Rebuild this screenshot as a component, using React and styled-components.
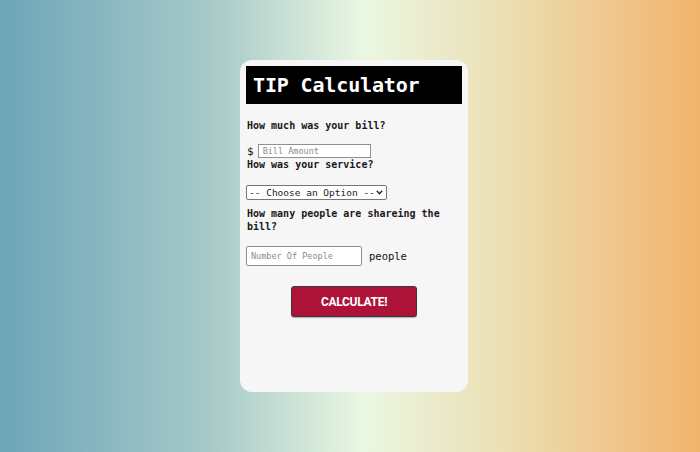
import React from "react";
import styled, { createGlobalStyle } from "styled-components";

const Global = createGlobalStyle`
  html, body { margin: 0; padding: 0; height: 100%; }
  body {
    background: linear-gradient(to right, #6da6b8 0%, #a6c9c8 30%, #eaf7e2 52%, #ecdfb4 72%, #f2b36c 100%);
    font-family: "DejaVu Sans Mono", monospace;
  }
  #root { height: 100%; }
`;

const Page = styled.div`
  height: 452px;
  display: flex;
  align-items: center;
  justify-content: center;
  padding-left: 8px;
  box-sizing: border-box;
`;

const Card = styled.div`
  width: 228px;
  height: 332px;
  box-sizing: border-box;
  padding: 6px;
  background: #f6f6f6;
  border-radius: 12px;
  display: flex;
  flex-direction: column;
`;

const Header = styled.div`
  height: 38px;
  background: #000;
  padding-left: 7px;
  display: flex;
  align-items: center;
`;

const Title = styled.h1`
  margin: 0;
  color: #fff;
  font-family: "DejaVu Sans Mono", monospace;
  font-size: 20px;
  font-weight: 700;
  line-height: 38px;
  letter-spacing: -0.15px;
`;

const Question = styled.p`
  margin: ${(p) => p.$mt}px 0 0 0;
  font-size: 10px;
  line-height: 13px;
  font-weight: 700;
  color: #1a1a1a;
  padding-left: 1px;
`;

const Row = styled.div`
  margin-top: ${(p) => p.$mt}px;
  display: flex;
  align-items: center;
  gap: ${(p) => p.$gap}px;
  font-size: 10px;
  color: #111;
`;

const Dollar = styled.span`
  font-size: 11px;
  font-weight: 400;
  padding-left: 1px;
`;

const TextInput = styled.input`
  box-sizing: border-box;
  width: ${(p) => p.$w}px;
  height: ${(p) => p.$h}px;
  border: 1px solid #8f8f8f;
  border-radius: ${(p) => p.$r}px;
  background: #fff;
  font-family: "DejaVu Sans Mono", monospace;
  font-size: 8.5px;
  padding: 0 4px;
  margin: 0;
  &::placeholder { color: #8c8c8c; }
`;

const SelectWrap = styled.div`
  position: relative;
  margin-top: 14px;
  width: 141px;
  height: 15px;
  align-self: flex-start;
`;

const Select = styled.select`
  display: block;
  appearance: none;
  -webkit-appearance: none;
  box-sizing: border-box;
  width: 100%;
  height: 100%;
  border: 1px solid #767676;
  border-radius: 2px;
  background: #fff;
  font-family: "DejaVu Sans Mono", monospace;
  font-size: 9.5px;
  color: #222;
  padding: 0 0 0 2px;
  margin: 0;
`;

const Chevron = styled.svg`
  position: absolute;
  right: 4px;
  top: 5px;
  width: 7px;
  height: 5px;
  pointer-events: none;
`;

const Unit = styled.span`
  font-size: 10.5px;
  font-weight: 500;
`;

const Button = styled.button`
  margin: 20px auto 0;
  width: 126px;
  height: 31px;
  background: #ad1238;
  border: 1px solid #3a3a3a;
  border-radius: 3px;
  box-shadow: 0 1px 1px rgba(0,0,0,0.3);
  color: #fff;
  font-family: Roboto, "Liberation Sans", sans-serif;
  font-size: 12px;
  font-weight: 700;
  letter-spacing: -0.3px;
  cursor: pointer;
`;

export default function App() {
  return (
    <>
      <Global />
      <Page>
        <Card>
          <Header>
            <Title>TIP Calculator</Title>
          </Header>
          <Question $mt={15}>How much was your bill?</Question>
          <Row $mt={12} $gap={4}>
            <Dollar>$</Dollar>
            <TextInput $w={113} $h={14} $r={0} placeholder="Bill Amount" />
          </Row>
          <Question $mt={0}>How was your service?</Question>
          <SelectWrap>
            <Select defaultValue="">
              <option value="">-- Choose an Option --</option>
              <option value="0.3">30% - Outstanding</option>
              <option value="0.2">20% - Good</option>
              <option value="0.15">15% - It was OK</option>
              <option value="0.1">10% - Bad</option>
              <option value="0.05">5% - Terrible</option>
            </Select>
            <Chevron viewBox="0 0 7 5">
              <path d="M0.8 0.8 L3.5 3.8 L6.2 0.8" fill="none" stroke="#222" strokeWidth="1.3" />
            </Chevron>
          </SelectWrap>
          <Question $mt={7}>How many people are shareing the bill?</Question>
          <Row $mt={13} $gap={7}>
            <TextInput $w={116} $h={20} $r={2} placeholder="Number Of People" />
            <Unit>people</Unit>
          </Row>
          <Button>CALCULATE!</Button>
        </Card>
      </Page>
    </>
  );
}
